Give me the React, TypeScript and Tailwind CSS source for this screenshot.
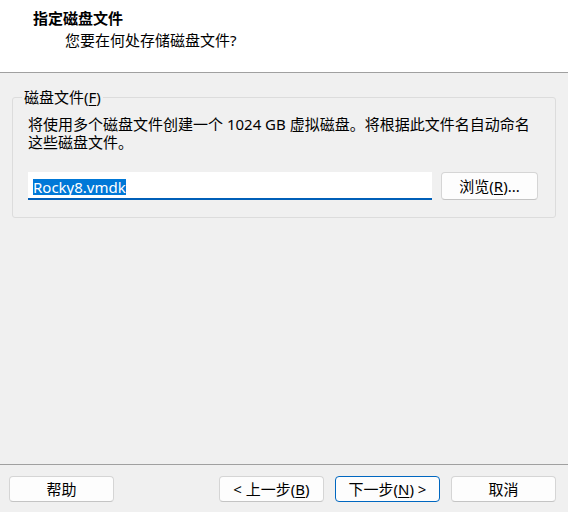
import React from "react";

const font = { fontFamily: '"Noto Sans", "Noto Sans CJK SC", sans-serif' };

function Btn({ children, primary }: { children: React.ReactNode; primary?: boolean }) {
  return (
    <div
      className={
        "w-[105px] h-[26px] flex items-center justify-center rounded-[4px] bg-[#fdfdfd] text-[15px] leading-[18px] text-black border " +
        (primary ? "border-[#0067c0]" : "border-[#d5d5d5] border-b-[#c4c4c4]")
      }
    >
      {children}
    </div>
  );
}

export default function App() {
  return (
    <div className="w-[568px] h-[512px] bg-[#f0f0f0] flex flex-col text-black overflow-hidden" style={font}>
      <div className="h-[73px] bg-white border-b border-[#a0a0a0] flex flex-col pt-[9px]">
        <div className="pl-[33px] text-[15px] leading-[18px] font-bold">指定磁盘文件</div>
        <div className="pl-[65px] mt-[4px] text-[15px] leading-[18px]">您要在何处存储磁盘文件?</div>
      </div>

      <fieldset className="mx-3 mt-[15px] border border-[#dcdcdc] rounded-[3px] px-[15px] pb-[17px]">
        <legend className="ml-[-6px] px-[2px] text-[15px] leading-[18px]">
          磁盘文件(<span className="underline underline-offset-2">F</span>)
        </legend>
        <p className="mt-[9px] text-[15px] leading-[18px] whitespace-nowrap">
          将使用多个磁盘文件创建一个 1024 GB 虚拟磁盘。将根据此文件名自动命名
          <br />
          这些磁盘文件。
        </p>
        <div className="mt-[21px] flex items-start gap-[9px]">
          <div className="w-[404px] h-[28px] bg-white border-b-2 border-[#005fb8] pl-[5px] pt-[3px]">
            <span className="inline-block bg-[#0078d7] text-white text-[15px] leading-[16px] h-[16px]">Rocky8.vmdk</span>
          </div>
          <div className="w-[97px] h-[28px] flex items-center justify-center rounded-[4px] bg-[#fdfdfd] border border-[#d5d5d5] border-b-[#c4c4c4] text-[15px] leading-[18px]">
            浏览(<span className="underline underline-offset-2">R</span>)...
          </div>
        </div>
      </fieldset>

      <div className="flex-1" />

      <div className="border-t border-[#a0a0a0] pt-[11px] pb-[10px] pl-[9px] pr-[12px] flex items-center">
        <Btn>帮助</Btn>
        <div className="flex-1" />
        <div className="flex gap-[11px]">
          <Btn>&lt; 上一步(<span className="underline underline-offset-2">B</span>)</Btn>
          <Btn primary>下一步(<span className="underline underline-offset-2">N</span>) &gt;</Btn>
          <Btn>取消</Btn>
        </div>
      </div>
    </div>
  );
}
